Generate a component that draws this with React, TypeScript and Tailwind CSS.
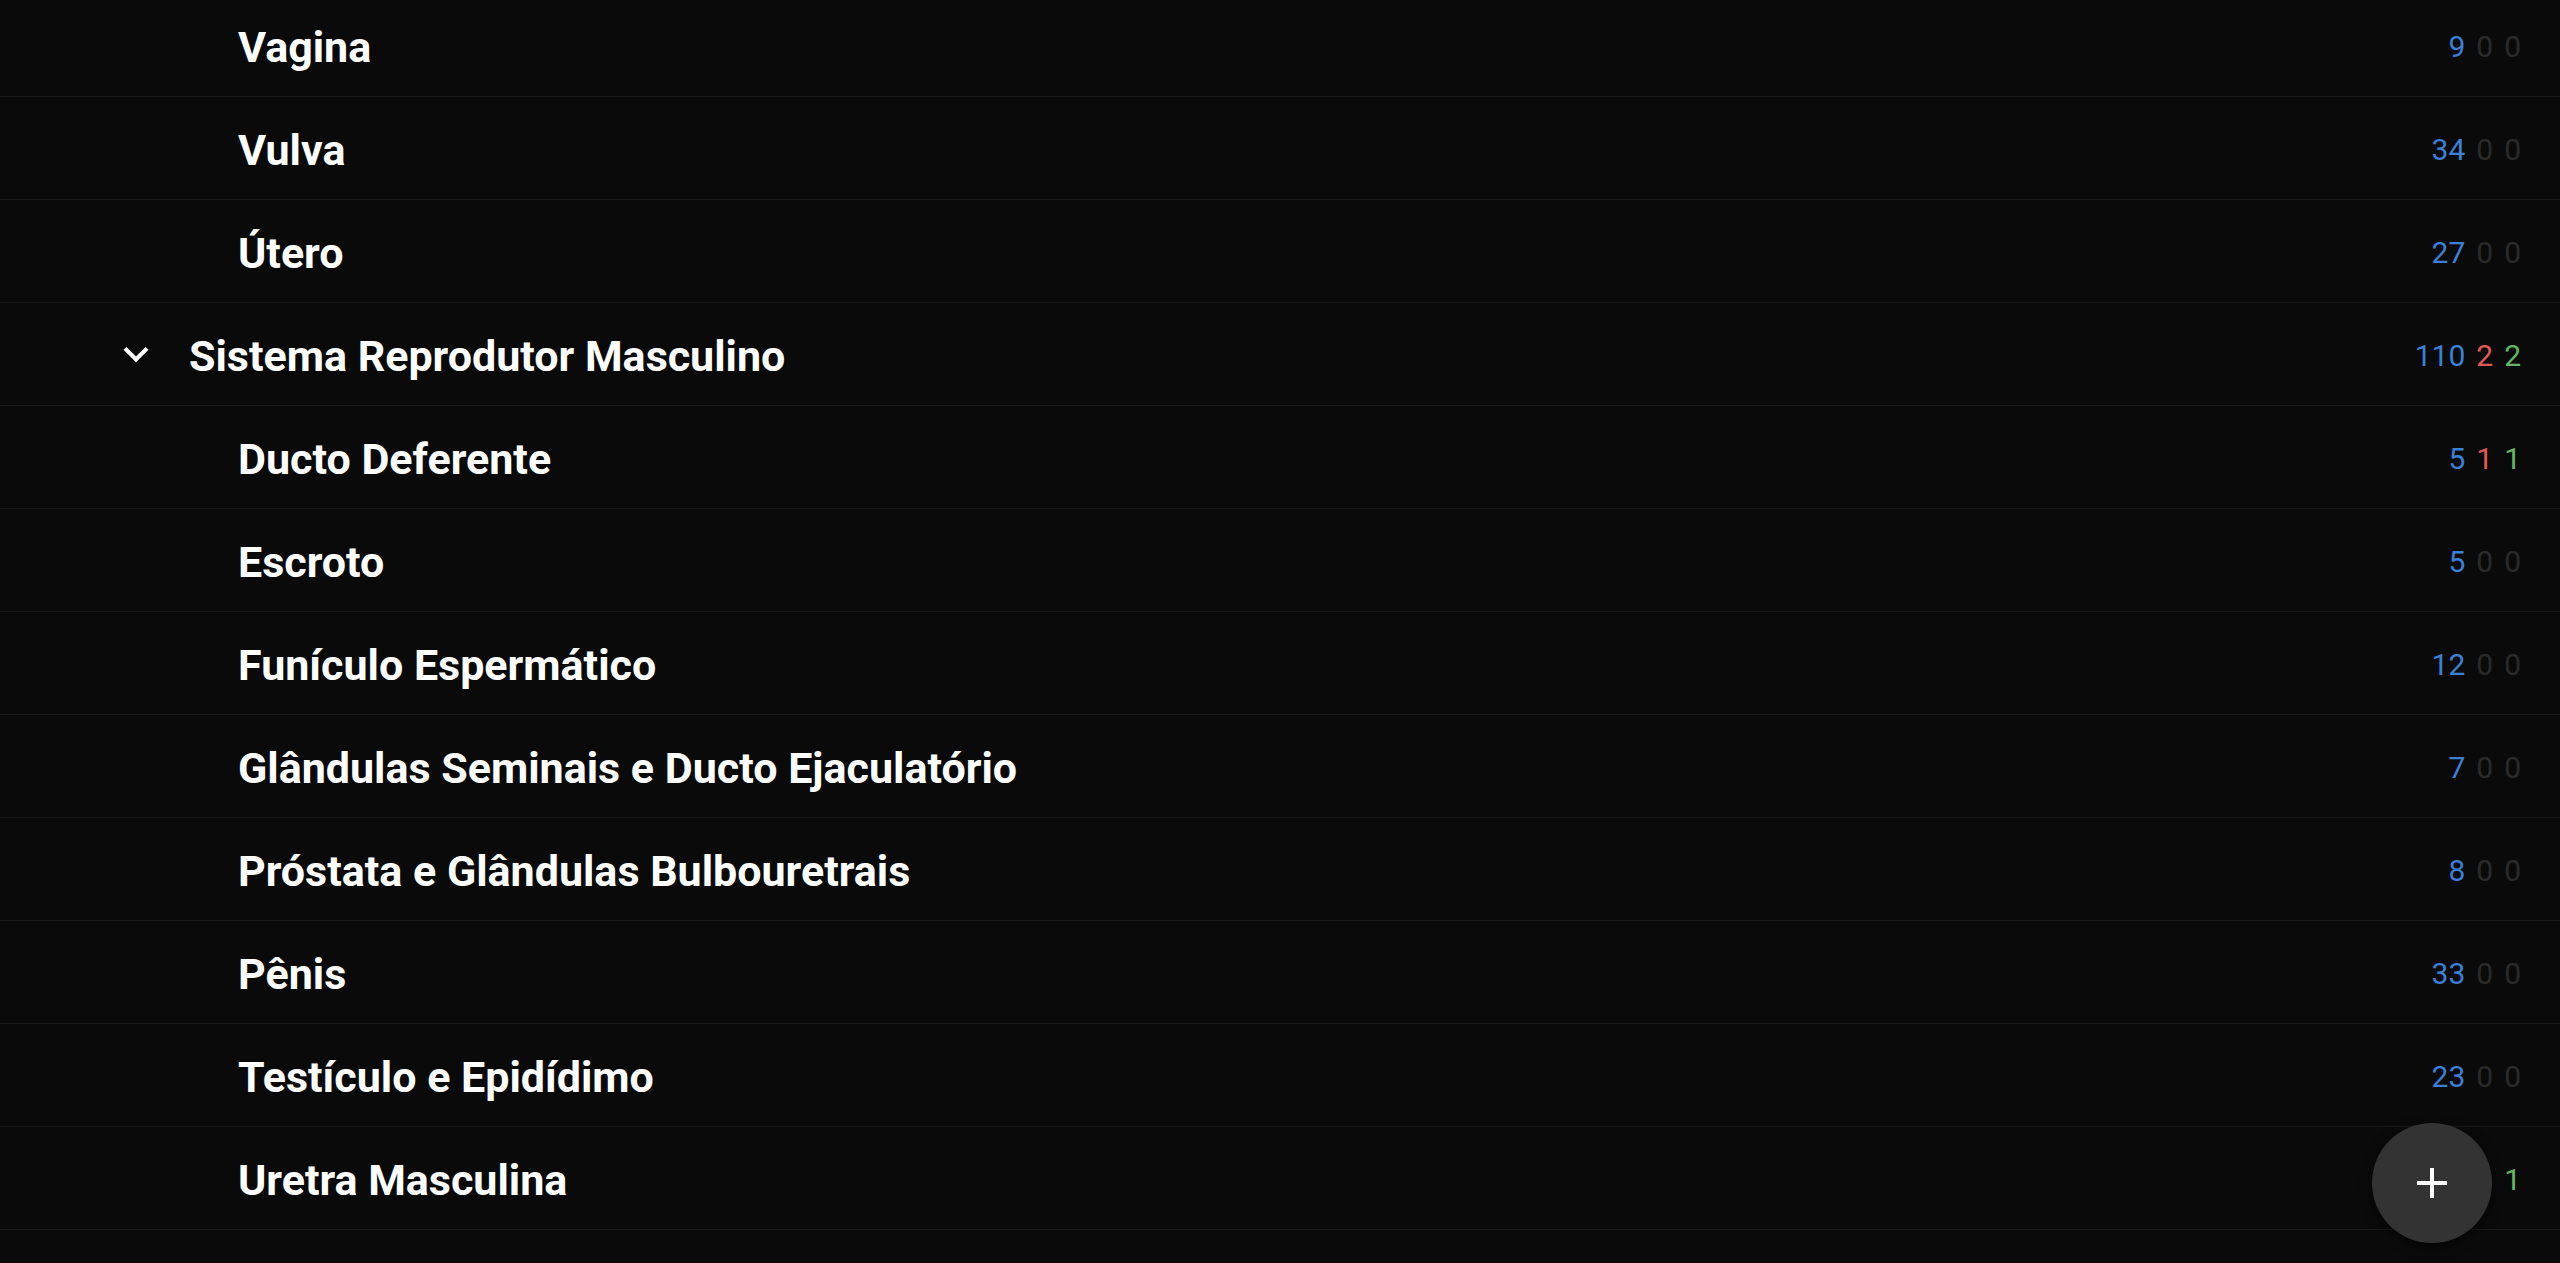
import React from "react";

type Row = { label: string; level: 0 | 1; a: number; b: number; c: number; open?: boolean };

const rows: Row[] = [
  { label: "Vagina", level: 1, a: 9, b: 0, c: 0 },
  { label: "Vulva", level: 1, a: 34, b: 0, c: 0 },
  { label: "Útero", level: 1, a: 27, b: 0, c: 0 },
  { label: "Sistema Reprodutor Masculino", level: 0, a: 110, b: 2, c: 2, open: true },
  { label: "Ducto Deferente", level: 1, a: 5, b: 1, c: 1 },
  { label: "Escroto", level: 1, a: 5, b: 0, c: 0 },
  { label: "Funículo Espermático", level: 1, a: 12, b: 0, c: 0 },
  { label: "Glândulas Seminais e Ducto Ejaculatório", level: 1, a: 7, b: 0, c: 0 },
  { label: "Próstata e Glândulas Bulbouretrais", level: 1, a: 8, b: 0, c: 0 },
  { label: "Pênis", level: 1, a: 33, b: 0, c: 0 },
  { label: "Testículo e Epidídimo", level: 1, a: 23, b: 0, c: 0 },
  { label: "Uretra Masculina", level: 1, a: 4, b: 0, c: 1 },
  { label: "", level: 1, a: 0, b: 0, c: 0 },
];

function Chevron() {
  return (
    <svg viewBox="0 0 24 24" className="w-[50px] h-[50px] shrink-0" fill="#ffffff">
      <path d="M16.59 8.59L12 13.17 7.41 8.59 6 10l6 6 6-6z" />
    </svg>
  );
}

function Counts({ a, b, c }: { a: number; b: number; c: number }) {
  return (
    <div className="flex items-center gap-[11px] text-[30px] font-normal leading-none pt-[3px]">
      <span className="text-[#3b7fd6]">{a}</span>
      <span className={b > 0 ? "text-[#e05a55]" : "text-[#2a2a2a]"}>{b}</span>
      <span className={c > 0 ? "text-[#63b866]" : "text-[#2a2a2a]"}>{c}</span>
    </div>
  );
}

export default function App() {
  return (
    <div
      className="min-h-screen h-[1263px] overflow-hidden bg-[#0a0a0a] text-white"
      style={{ fontFamily: "Roboto, 'Noto Sans', sans-serif" }}
    >
      <div className="-mt-[6px]">
        {rows.map((r, i) => (
          <div
            key={i}
            className="h-[103px] border-b border-[#1a1a1a] flex items-center pr-[39px]"
          >
            {r.level === 0 ? (
              <div className="flex items-center pl-[111px] flex-1 min-w-0">
                <Chevron />
                <span className="ml-[28px] text-[43px] font-bold leading-none pt-[4px]">{r.label}</span>
              </div>
            ) : (
              <div className="flex-1 min-w-0 pl-[238px]">
                <span className="text-[43px] font-bold leading-none block pt-[4px]">{r.label}</span>
              </div>
            )}
            {r.label && <Counts a={r.a} b={r.b} c={r.c} />}
          </div>
        ))}
      </div>
      <button className="fixed right-[68px] bottom-[20px] w-[120px] h-[120px] rounded-full bg-[#333333] flex items-center justify-center shadow-[0_4px_12px_rgba(0,0,0,0.6)]">
        <svg viewBox="0 0 32 32" className="w-[32px] h-[32px]">
          <path d="M16 1v30M1 16h30" stroke="#ffffff" strokeWidth="4" />
        </svg>
      </button>
    </div>
  );
}
